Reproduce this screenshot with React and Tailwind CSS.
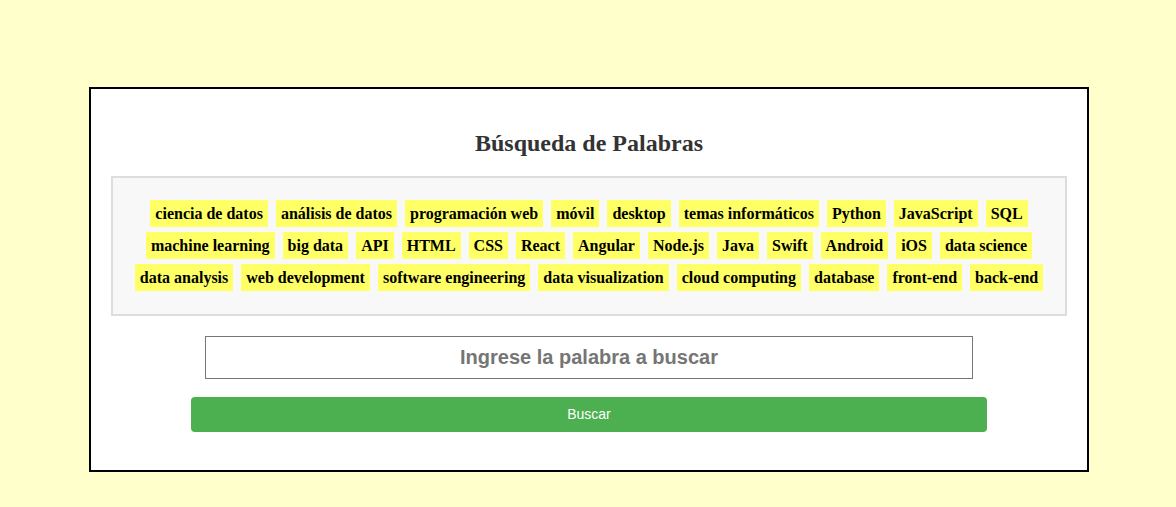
import React from "react";

const words = [
  "ciencia de datos", "análisis de datos", "programación web", "móvil", "desktop",
  "temas informáticos", "Python", "JavaScript", "SQL", "machine learning", "big data",
  "API", "HTML", "CSS", "React", "Angular", "Node.js", "Java", "Swift", "Android",
  "iOS", "data science", "data analysis", "web development", "software engineering",
  "data visualization", "cloud computing", "database", "front-end", "back-end",
];

export default function App() {
  return (
    <div className="min-h-[507px] w-full bg-[#ffffcc] pt-[87px] pb-[35px] pl-[2px]">
      <div className="mx-auto w-[1000px] border-2 border-black bg-white p-5 pb-[38px]">
        <h2
          className="mt-5 mb-[19px] text-center text-[24px] font-bold leading-[28px] text-[#333333]"
          style={{ fontFamily: '"Liberation Serif", "Times New Roman", serif' }}
        >
          Búsqueda de Palabras
        </h2>
        <div className="border-2 border-[#dddddd] bg-[#f8f8f8] px-4 pt-[22px] pb-[23px]">
          <div className="flex flex-wrap justify-center gap-x-2 gap-y-[5px]">
            {words.map((w) => (
              <span
                key={w}
                className="flex h-[27px] items-center bg-[#ffff66] px-[5px] text-[16px] font-bold text-black"
                style={{ fontFamily: '"Liberation Serif", "Times New Roman", serif' }}
              >
                {w}
              </span>
            ))}
          </div>
        </div>
        <div className="mt-5 flex justify-center">
          <input
            type="text"
            placeholder="Ingrese la palabra a buscar"
            className="h-[43px] w-[768px] border border-[#767676] bg-white text-center text-[20px] font-bold text-black outline-none placeholder:text-[#757575]"
            style={{ fontFamily: '"Liberation Sans", Arial, sans-serif' }}
          />
        </div>
        <div className="mt-[18px] flex justify-center">
          <button
            className="h-[35px] w-[796px] rounded-[4px] bg-[#4caf50] text-[14px] text-white"
            style={{ fontFamily: '"Liberation Sans", Arial, sans-serif' }}
          >
            Buscar
          </button>
        </div>
      </div>
    </div>
  );
}
